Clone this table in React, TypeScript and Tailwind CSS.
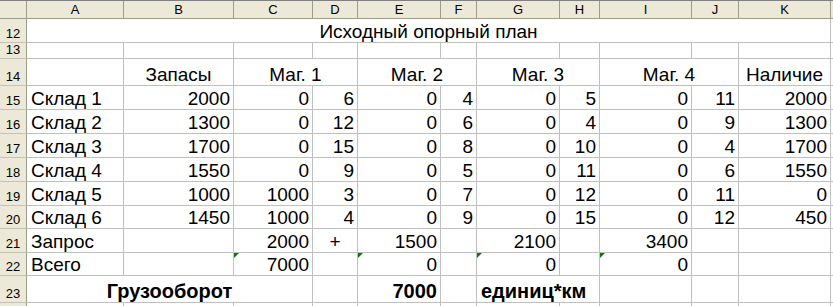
import React from 'react';

type Cell = {
  t?: string;
  a?: 'l' | 'r' | 'c';
  span?: number;
  b?: boolean;
  tri?: boolean;
};

const COLS = 'grid-cols-[27px_97px_110px_79px_45px_83px_36px_83px_40px_92px_47px_92px_20px]';
const LETTERS = ['A', 'B', 'C', 'D', 'E', 'F', 'G', 'H', 'I', 'J', 'K', ''];

const n = (t: string): Cell => ({ t, a: 'r' });
const e: Cell = {};

const row = (name: string, vals: (string | number)[]): Cell[] => [
  { t: name, a: 'l' },
  ...vals.map((v) => n(String(v))),
  e,
];

const rows: { num: string; h: string; cells: Cell[] }[] = [
  { num: '12', h: 'h-[24px]', cells: [{ t: 'Исходный опорный план', a: 'c', span: 11 }, e] },
  { num: '13', h: 'h-[16px]', cells: Array.from({ length: 12 }, () => e) },
  {
    num: '14',
    h: 'h-[27px]',
    cells: [
      e,
      { t: 'Запасы', a: 'c' },
      { t: 'Маг. 1', a: 'c', span: 2 },
      { t: 'Маг. 2', a: 'c', span: 2 },
      { t: 'Маг. 3', a: 'c', span: 2 },
      { t: 'Маг. 4', a: 'c', span: 2 },
      { t: 'Наличие', a: 'c' },
      e,
    ],
  },
  { num: '15', h: 'h-[24px]', cells: row('Склад 1', [2000, 0, 6, 0, 4, 0, 5, 0, 11, 2000]) },
  { num: '16', h: 'h-[24px]', cells: row('Склад 2', [1300, 0, 12, 0, 6, 0, 4, 0, 9, 1300]) },
  { num: '17', h: 'h-[24px]', cells: row('Склад 3', [1700, 0, 15, 0, 8, 0, 10, 0, 4, 1700]) },
  { num: '18', h: 'h-[24px]', cells: row('Склад 4', [1550, 0, 9, 0, 5, 0, 11, 0, 6, 1550]) },
  { num: '19', h: 'h-[24px]', cells: row('Склад 5', [1000, 1000, 3, 0, 7, 0, 12, 0, 11, 0]) },
  { num: '20', h: 'h-[23px]', cells: row('Склад 6', [1450, 1000, 4, 0, 9, 0, 15, 0, 12, 450]) },
  {
    num: '21',
    h: 'h-[24px]',
    cells: [
      { t: 'Запрос', a: 'l' },
      e,
      n('2000'),
      { t: '+', a: 'c' },
      n('1500'),
      e,
      n('2100'),
      e,
      n('3400'),
      e,
      e,
      e,
    ],
  },
  {
    num: '22',
    h: 'h-[23px]',
    cells: [
      { t: 'Всего', a: 'l' },
      e,
      { t: '7000', a: 'r', tri: true },
      e,
      { t: '0', a: 'r', tri: true },
      e,
      { t: '0', a: 'r', tri: true },
      e,
      { t: '0', a: 'r', tri: true },
      e,
      e,
      e,
    ],
  },
  {
    num: '23',
    h: 'h-[27px]',
    cells: [
      { t: 'Грузооборот', a: 'c', span: 3, b: true },
      e,
      { t: '7000', a: 'r', b: true },
      e,
      { t: 'единиц*км', a: 'l', span: 2, b: true },
      e,
      e,
      e,
      e,
    ],
  },
  { num: '', h: 'h-[24px]', cells: Array.from({ length: 12 }, () => e) },
];

const spanClass: Record<number, string> = {
  1: 'col-span-1',
  2: 'col-span-2',
  3: 'col-span-3',
  11: 'col-span-11',
};

function DataCell({ c }: { c: Cell }) {
  const align =
    c.a === 'r' ? 'justify-end pr-[3px]' : c.a === 'c' ? 'justify-center' : 'justify-start pl-[4px]';
  return (
    <div
      className={`relative flex items-end pb-[1px] border-r border-b border-[#c0c0c0] whitespace-nowrap overflow-hidden ${
        spanClass[c.span ?? 1]
      } ${align} ${c.b ? 'font-bold text-[20px]' : ''}`}
    >
      {c.tri && (
        <span className="absolute left-0 top-0 w-0 h-0 border-t-[5px] border-r-[5px] border-t-[#008000] border-r-transparent" />
      )}
      {c.t}
    </div>
  );
}

export default function App() {
  return (
    <div className="h-[306px] w-[833px] overflow-hidden bg-white text-black font-['Liberation_Sans',Arial,sans-serif] text-[19px] leading-none">
      <div className={`grid ${COLS} h-[19px] bg-[#ece9d8] border-t border-[#808080] text-[13px]`}>
        <div className="border-r border-b border-[#9d9d8c]" />
        {LETTERS.map((l, i) => (
          <div
            key={i}
            className="flex items-center justify-center border-r border-b border-[#9d9d8c] text-[#000]"
          >
            {l}
          </div>
        ))}
      </div>
      {rows.map((r, i) => (
        <div key={i} className={`grid ${COLS} ${r.h}`}>
          <div className="flex items-end justify-center pb-[2px] bg-[#ece9d8] border-r border-b border-r-[#9d9d8c] border-b-[#c5c2b2] text-[13px]">
            {r.num}
          </div>
          {r.cells.map((c, j) => (
            <DataCell key={j} c={c} />
          ))}
        </div>
      ))}
    </div>
  );
}
